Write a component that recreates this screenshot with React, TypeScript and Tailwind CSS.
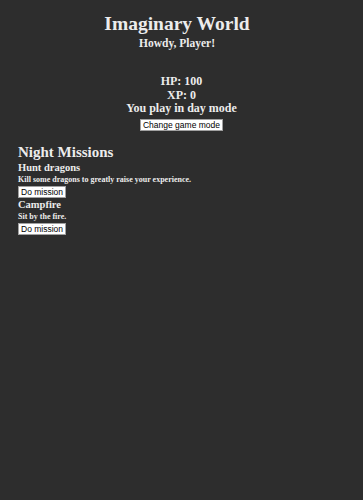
const missions = [
  { title: "Hunt dragons", text: "Kill some dragons to greatly raise your experience." },
  { title: "Campfire", text: "Sit by the fire." },
]

function Button({ children }: { children: string }) {
  return (
    <button className="block border border-[#a0a0a0] bg-white px-[2px] font-['Liberation_Sans',sans-serif] text-[8.5px] leading-[10px] font-normal text-black">
      {children}
    </button>
  )
}

export default function App() {
  return (
    <div className="min-h-[500px] bg-[#2d2d2d] font-['Liberation_Serif',serif] font-bold text-[#ececec]">
      <div className="flex flex-col items-center pt-[12px]">
        <div className="flex flex-col items-center pr-[9px]">
          <h1 className="text-[19.5px] leading-[24px]">Imaginary World</h1>
          <p className="text-[11.5px] leading-[14px]">Howdy, Player!</p>
        </div>
        <div className="mt-[25px] flex flex-col items-center text-[12px] leading-[13.5px]">
          <p>HP: 100</p>
          <p>XP: 0</p>
          <p>You play in day mode</p>
          <div className="mt-[3px]">
            <Button>Change game mode</Button>
          </div>
        </div>
      </div>
      <div className="mt-[13px] px-[18px]">
        <h2 className="text-[15px] leading-[17px]">Night Missions</h2>
        {missions.map((m) => (
          <div key={m.title}>
            <h3 className="text-[10.5px] leading-[13px]">{m.title}</h3>
            <p className="text-[8px] leading-[11px]">{m.text}</p>
            <div className="mt-px">
              <Button>Do mission</Button>
            </div>
          </div>
        ))}
      </div>
    </div>
  )
}
